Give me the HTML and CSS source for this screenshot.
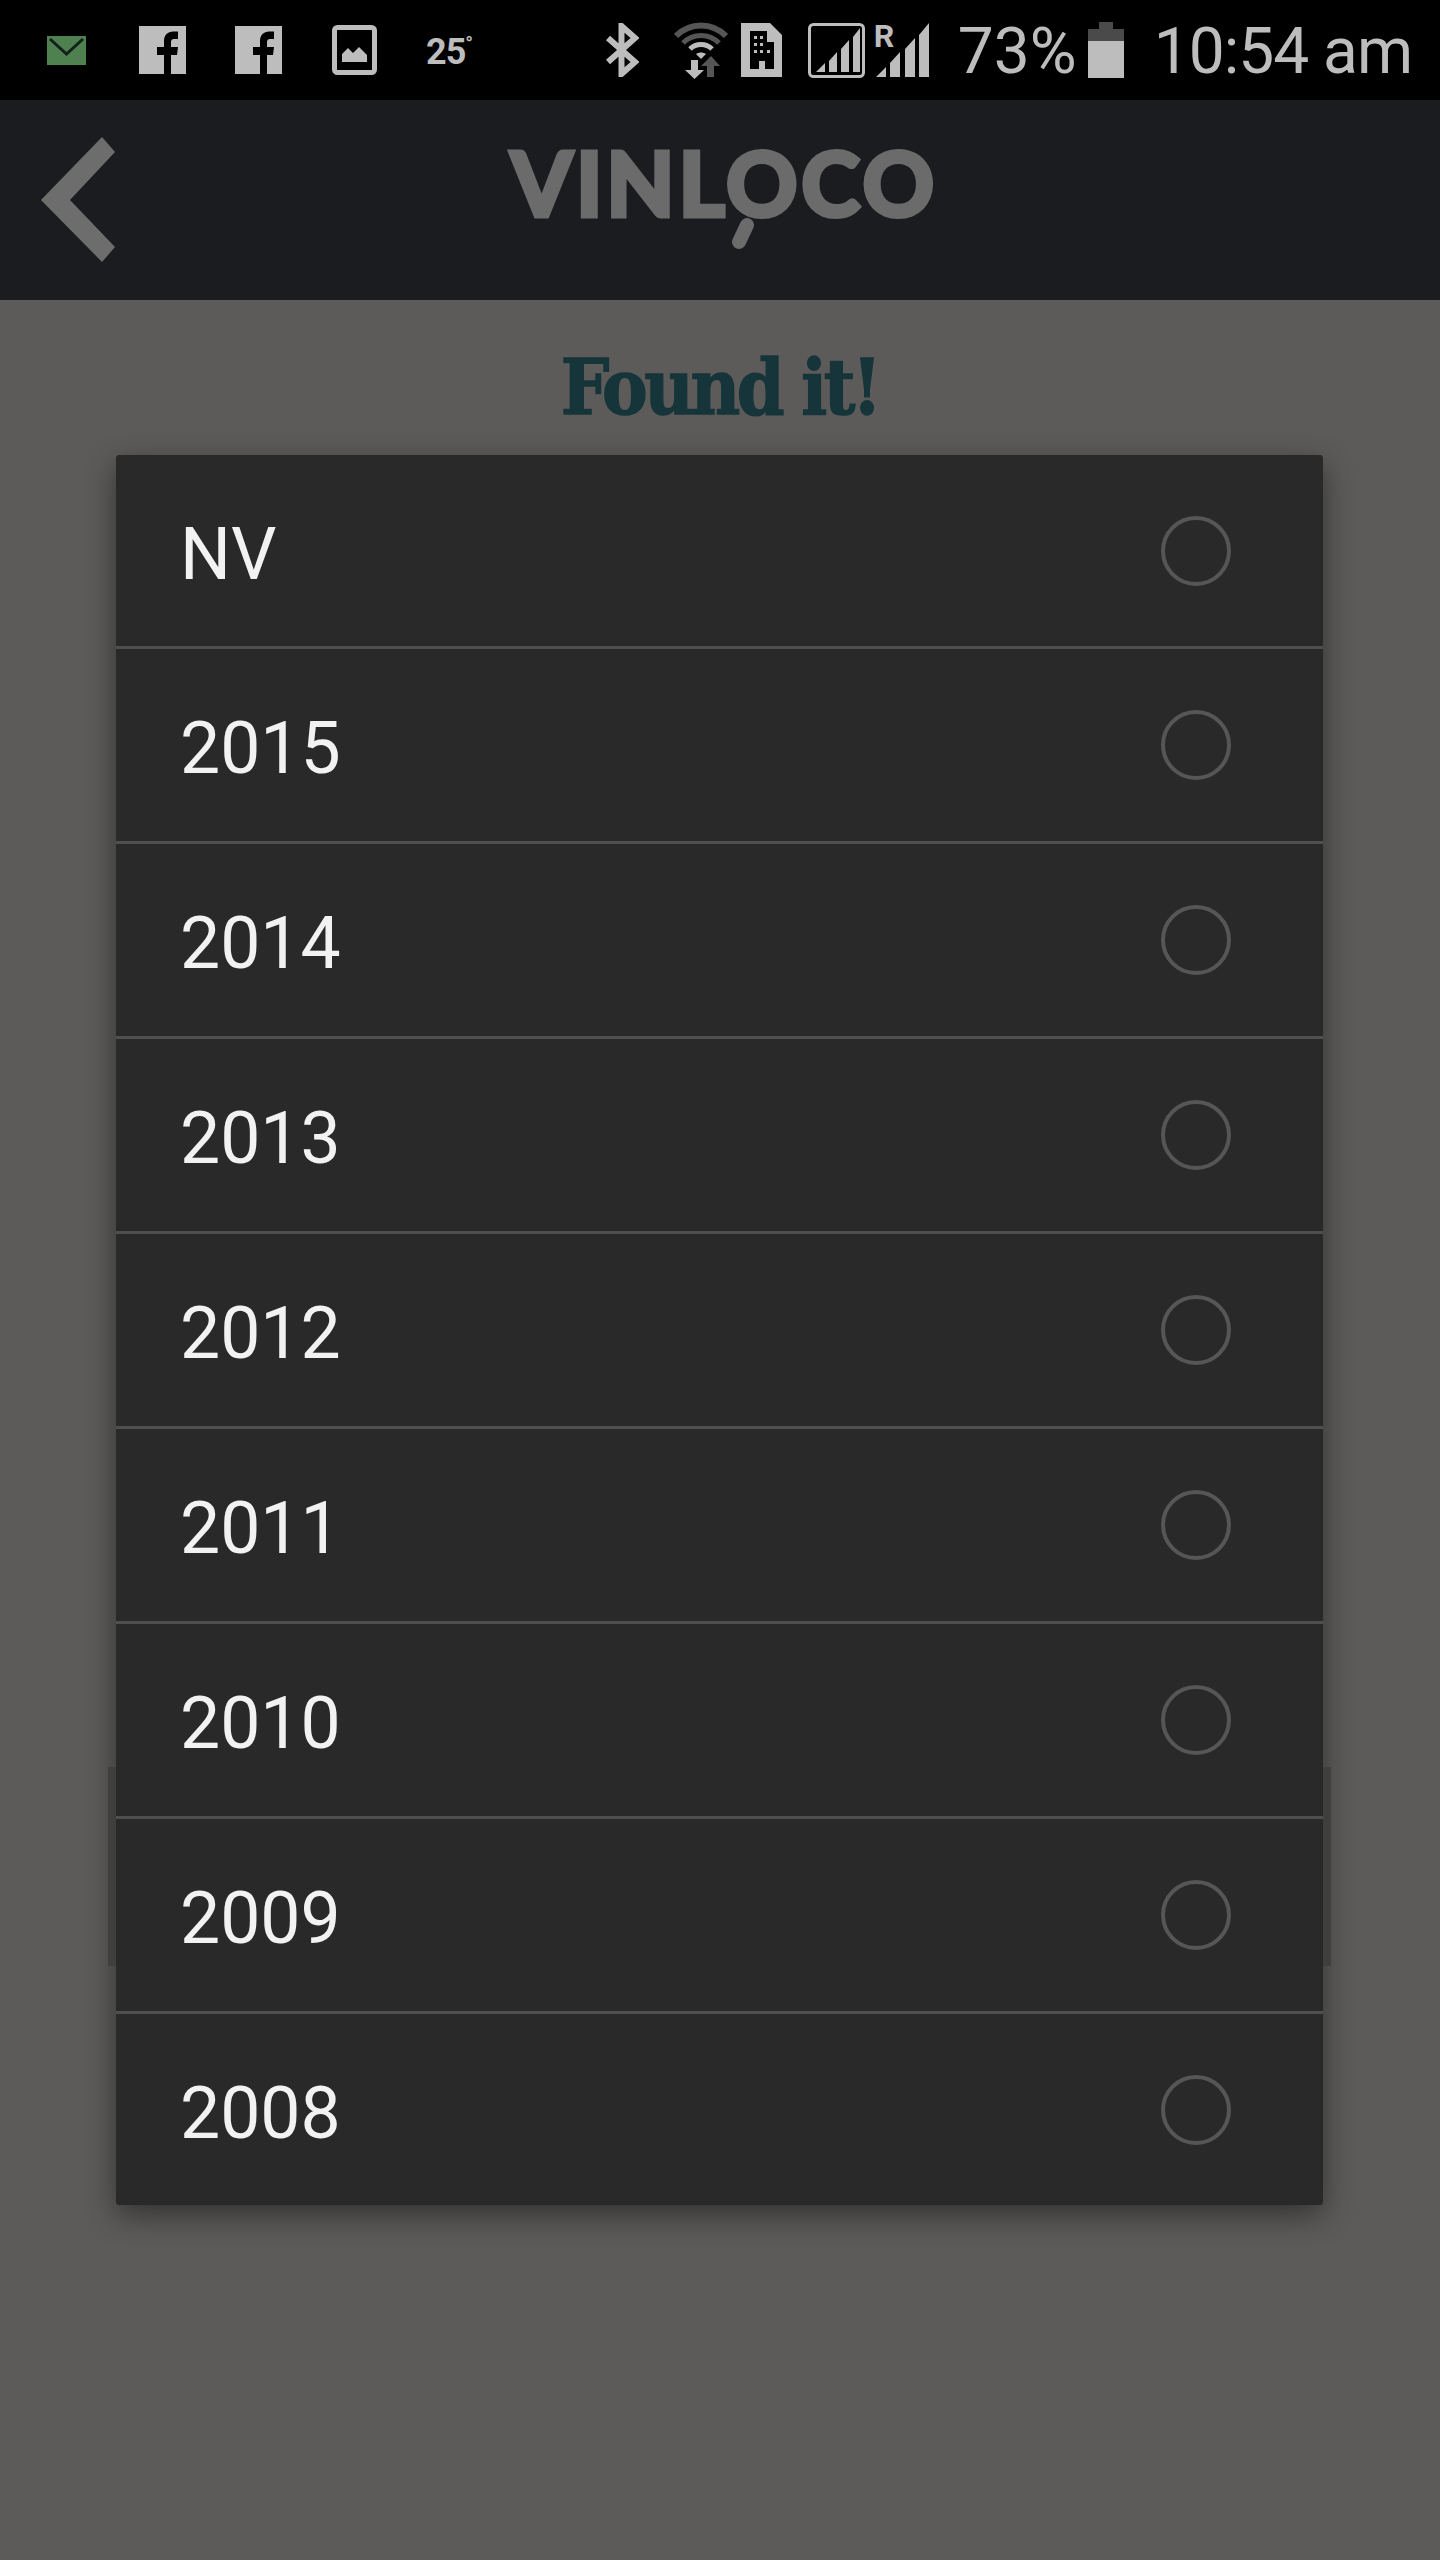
FILE: index.html
```html
<!DOCTYPE html>
<html lang="en">
<head>
    <meta charset="UTF-8">
    <meta name="viewport" content="width=device-width, initial-scale=1.0">
    <title>Vinloco</title>
    <link rel="stylesheet" href="styles.css">
</head>
<body>
    <div class="status-bar">
        <div class="status-left">
            <svg class="ico-mail" width="39" height="29" viewBox="0 0 39 29"><rect width="39" height="29" fill="#4f8050"/><path d="M3 3 L19.5 18 L36 3" fill="none" stroke="#14201a" stroke-width="3"/></svg>
            <svg class="ico-fb" width="47" height="48" viewBox="0 0 47 48"><rect width="47" height="48" fill="#bdbdbd"/><path d="M25 48 V29 H18 V21 H25 V15 C25 9 29 5.5 34 5.5 H39 V13 H35 C33 13 32 14 32 16 V21 H39 L38 29 H32 V48 Z" fill="#000"/></svg>
            <svg class="ico-fb" width="47" height="48" viewBox="0 0 47 48"><rect width="47" height="48" fill="#bdbdbd"/><path d="M25 48 V29 H18 V21 H25 V15 C25 9 29 5.5 34 5.5 H39 V13 H35 C33 13 32 14 32 16 V21 H39 L38 29 H32 V48 Z" fill="#000"/></svg>
            <svg class="ico-pic" width="45" height="50" viewBox="0 0 45 50"><rect x="2.5" y="2.5" width="40" height="45" rx="3" fill="none" stroke="#bdbdbd" stroke-width="5"/><path d="M10 37 V29 L16 23 L21 28 L27 22 L35 30 V37 Z" fill="#bdbdbd"/></svg>
            <span class="temp">25<sup>°</sup></span>
        </div>
        <div class="status-right">
            <svg class="ico-bt" width="35" height="54" viewBox="0 0 35 54"><path d="M4 15 L31 39 L17.5 51 V3 L31 15 L4 39" fill="none" stroke="#bdbdbd" stroke-width="6"/></svg>
            <svg class="ico-wifi" width="54" height="57" viewBox="0 0 54 57">
                <path d="M2 14 C16 0 38 0 52 14" fill="none" stroke="#555" stroke-width="6"/>
                <path d="M9 21 C19 11 35 11 45 21" fill="none" stroke="#555" stroke-width="5"/>
                <path d="M16 27 C22 21 32 21 38 27" fill="none" stroke="#bdbdbd" stroke-width="5"/>
                <path d="M22 32 C25 30 29 30 32 32 L27 37 Z" fill="#bdbdbd"/>
                <path d="M17 38 H24 V48 H30 L20.5 57 L11 48 H17 Z" fill="#bdbdbd"/>
                <path d="M33 55 V44 H27 L37 34 L46 44 H40 V55 Z" fill="#555"/>
            </svg>
            <svg class="ico-sim" width="41" height="54" viewBox="0 0 41 54"><path d="M0 0 H29 L41 12 V54 H0 Z" fill="#bdbdbd"/><path d="M9 8 H26 V19 H33 V46 H24 V38 H18 V46 H9 Z" fill="#000"/><g fill="#bdbdbd"><rect x="13" y="13" width="3" height="3"/><rect x="19" y="13" width="3" height="3"/><rect x="13" y="20" width="3" height="3"/><rect x="19" y="20" width="3" height="3"/><rect x="13" y="27" width="3" height="3"/><rect x="19" y="27" width="3" height="3"/><rect x="26" y="27" width="3" height="3"/></g></svg>
            <svg class="ico-box" width="57" height="55" viewBox="0 0 57 55"><rect x="1.5" y="1.5" width="54" height="52" rx="4" fill="none" stroke="#bdbdbd" stroke-width="3"/><path d="M8 49 L17 40 V49 Z M21 49 V38 L29 29 V49 Z M33 49 V26 L41 17 V49 Z M45 49 V14 L52 5 V49 Z" fill="#bdbdbd"/></svg>
            <div class="signal">
                <span class="roam">R</span>
                <svg width="59" height="54" viewBox="0 0 59 54"><path d="M3 54 L13 44 V54 Z M17 54 V40 L27 29 V54 Z M32 54 V26 L42 15 V54 Z M46 54 V12 L56 0 V54 Z" fill="#bdbdbd"/></svg>
            </div>
            <span class="batt-text">73%</span>
            <svg class="ico-batt" width="36" height="56" viewBox="0 0 36 56"><path d="M11 0 H25 V7 H36 V19 H0 V7 H11 Z" fill="#4a4a4a"/><rect y="19" width="36" height="37" fill="#bdbdbd"/></svg>
            <span class="clock">10:54 am</span>
        </div>
    </div>

    <header class="app-header">
        <svg class="back" width="74" height="125" viewBox="0 0 74 125"><path d="M61 0 L74 15 L29 63 L74 110 L61 125 L0 63 Z" fill="#6d6d6d"/></svg>
        <div class="logo">
            <span class="logo-text">VINLOCO</span>
            <svg class="logo-handle" width="24" height="40" viewBox="0 0 24 40"><path d="M16 7 L8 24" stroke="#6b6b6b" stroke-width="14" stroke-linecap="round"/></svg>
        </div>
    </header>

    <main class="content">
        <h1 class="title">Found it!</h1>
        <ul class="card">
            <li class="row"><span class="row-label">NV</span><span class="radio"></span></li>
            <li class="row"><span class="row-label">2015</span><span class="radio"></span></li>
            <li class="row"><span class="row-label">2014</span><span class="radio"></span></li>
            <li class="row"><span class="row-label">2013</span><span class="radio"></span></li>
            <li class="row"><span class="row-label">2012</span><span class="radio"></span></li>
            <li class="row"><span class="row-label">2011</span><span class="radio"></span></li>
            <li class="row"><span class="row-label">2010</span><span class="radio"></span></li>
            <li class="row"><span class="row-label">2009</span><span class="radio"></span></li>
            <li class="row"><span class="row-label">2008</span><span class="radio"></span></li>
        </ul>
    </main>
</body>
</html>
```

FILE: styles.css
```css
html, body {
    margin: 0;
    padding: 0;
}

body {
    height: 2560px;
    overflow: hidden;
    background-color: #5c5b59;
    font-family: Roboto, 'Liberation Sans', sans-serif;
}

/* status bar */
.status-bar {
    display: flex;
    align-items: center;
    justify-content: space-between;
    height: 100px;
    padding: 0 28px 0 47px;
    box-sizing: border-box;
    background-color: #000;
    color: #bdbdbd;
}

.status-left, .status-right {
    display: flex;
    align-items: center;
}

.ico-mail { margin-right: 53px; }
.ico-fb { margin-right: 49px; }
.ico-pic { margin-left: 1px; margin-right: 49px; }

.temp {
    font-size: 36px;
    font-weight: 700;
    letter-spacing: -1px;
    line-height: 50px;
    width: 48px;
    padding-top: 4px;
}

.temp sup {
    font-size: 20px;
    line-height: 0;
}

.ico-bt { margin-right: 35px; }
.ico-wifi { margin-right: 13px; }
.ico-sim { margin-right: 26px; }
.ico-box { margin-right: 8px; }

.signal {
    position: relative;
    display: flex;
    margin-right: 26px;
}

.roam {
    position: absolute;
    left: 1px;
    top: -3px;
    font-size: 32px;
    font-weight: 700;
    line-height: 32px;
}

.batt-text, .clock {
    font-size: 64px;
    font-weight: 400;
    line-height: 64px;
    white-space: nowrap;
    padding-top: 4px;
}

.batt-text { width: 130px; }
.clock { letter-spacing: -1px; }
.ico-batt { margin-right: 30px; }

/* header */
.app-header {
    position: relative;
    display: flex;
    align-items: center;
    justify-content: center;
    height: 200px;
    background-color: #1a1c20;
}

.back {
    position: absolute;
    left: 41px;
    top: 37px;
}

.logo {
    position: relative;
    margin-top: -36px;
    margin-left: 5px;
}

.logo-text {
    display: block;
    padding-left: 4px;
    font-family: Lato, sans-serif;
    font-size: 88px;
    font-weight: 700;
    letter-spacing: 4.2px;
    line-height: 88px;
    color: #6b6b6b;
    -webkit-text-stroke: 5px #6b6b6b;
}

.logo-handle {
    position: absolute;
    left: 224px;
    top: 80px;
}

/* list */
.content {
    display: flex;
    flex-direction: column;
    align-items: center;
}

.title {
    margin: 0;
    height: 155px;
    box-sizing: border-box;
    padding-top: 42px;
    font-family: 'DejaVu Serif', serif;
    font-size: 77px;
    font-weight: 700;
    letter-spacing: -4px;
    line-height: 90px;
    color: #16353a;
    -webkit-text-stroke: 1.5px #16353a;
    transform: scaleX(0.89);
}

.card {
    position: relative;
    z-index: 0;
    width: 1207px;
    margin: 0 1px 0 0;
    padding: 0;
    list-style: none;
    border-radius: 4px;
    background-color: #292929;
    box-shadow: 0 10px 30px rgba(0, 0, 0, 0.45);
}

/* sliver of the page behind the dialog */
.card::before {
    content: '';
    position: absolute;
    z-index: -1;
    top: 1312px;
    left: -8px;
    right: -8px;
    height: 199px;
    background-color: #3f3f3e;
}

.row {
    display: flex;
    align-items: center;
    justify-content: space-between;
    height: 195px;
    box-sizing: border-box;
    padding: 0 92px 0 64px;
    border-bottom: 3px solid #4f4f4f;
    background-color: #292929;
}

.row:first-child {
    height: 194px;
    border-radius: 4px 4px 0 0;
}

.row:last-child {
    height: 191px;
    border-bottom: none;
    border-radius: 0 0 4px 4px;
}

.row-label {
    font-size: 71.5px;
    line-height: 80px;
    color: #f2f2f2;
    padding-top: 8px;
}

.radio {
    width: 70px;
    height: 70px;
    box-sizing: border-box;
    border: 4px solid #565656;
    border-radius: 50%;
}
```
